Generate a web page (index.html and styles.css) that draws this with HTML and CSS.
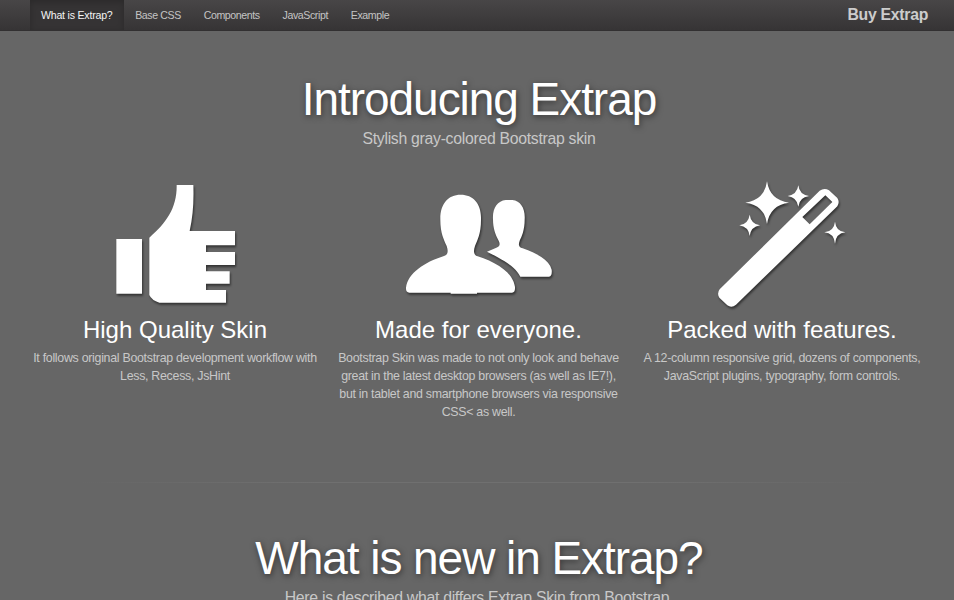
FILE: index.html
```
<!DOCTYPE html>
<html lang="en">
<head>
  <meta charset="UTF-8" />
  <meta name="viewport" content="width=device-width, initial-scale=1.0"/>
  <title>Extrap</title>
  <link rel="stylesheet" href="styles.css">
</head>
<body>

  <nav class="navbar">
    <ul class="nav">
      <li class="active"><a href="#">What is Extrap?</a></li>
      <li><a href="#">Base CSS</a></li>
      <li><a href="#">Components</a></li>
      <li><a href="#">JavaScript</a></li>
      <li><a href="#">Example</a></li>
    </ul>
    <a class="brand" href="#">Buy Extrap</a>
  </nav>

  <div class="marketing">
    <h1>Introducing Extrap</h1>
    <p class="byline">Stylish gray-colored Bootstrap skin</p>

    <div class="row">
      <div class="feature">
        <svg class="icon" viewBox="-30 3 510 408">
          <path d="M49 192H126V356H49Z"/>
          <path d="M230 30H280Q283 106 269 168H405V211H318V231H405V270H318V289H389V326H318V345H378V383H178Q155 376 148 360V188C200 143 231 98 230 30Z"/>
        </svg>
        <h3>High Quality Skin</h3>
        <p>It follows original Bootstrap development workflow with Less, Recess, JsHint</p>
      </div>
      <div class="feature">
        <svg class="icon" viewBox="-3 -12 510 408">
          <path d="M197 44C236 44 260 73 258 119C258 161 247 180 240 198C234 216 237 225 248 229C304 247 354 277 360 321Q361 337 351 338H246V341H167V338H43Q32 337 33 323C39 279 89 247 145 229C158 225 161 216 155 198C147 179 136 160 136 119C135 73 158 44 197 44Z"/>
          <path d="M332 60H352C378 63 391 86 389 118C389 151 380 171 374 182C370 193 370 202 383 205C423 219 463 240 470 269Q472 289 462 290H376C360 258 322 238 276 215L304 203C315 199 316 192 311 182C301 164 294 144 294 118C292 84 307 63 332 60Z"/>
        </svg>
        <h3>Made for everyone.</h3>
        <p>Bootstrap Skin was made to not only look and behave great in the latest desktop browsers (as well as IE7!), but in tablet and smartphone browsers via responsive CSS&lt; as well.</p>
      </div>
      <div class="feature">
        <svg class="icon" viewBox="-24 18 510 408">
          <path d="M186 34Q195 91 252 98Q195 105 186 162Q178 105 121 98Q178 91 186 34Z"/>
          <path d="M280 46Q283 74 312 78Q283 82 280 110Q276 82 248 78Q276 74 280 46Z"/>
          <path d="M134 134Q138 162 165 166Q138 170 134 198Q130 170 103 166Q130 162 134 134Z"/>
          <path d="M390 155Q393 184 421 187Q393 190 390 221Q387 190 358 187Q387 184 390 155Z"/>
          <path fill-rule="evenodd" d="M344 62Q358 53 372 61L397 84Q405 96 397 109L93 404Q80 415 67 406L43 383Q35 370 44 358ZM361 76L292 141L314 163L382 96Z"/>
        </svg>
        <h3>Packed with features.</h3>
        <p>A 12-column responsive grid, dozens of components, JavaScript plugins, typography, form controls.</p>
      </div>
    </div>

    <hr class="divider">

    <h1>What is new in Extrap?</h1>
    <p class="byline">Here is described what differs Extrap Skin from Bootstrap.</p>
  </div>

</body>
</html>
```
FILE: styles.css
```
body {
  margin: 0;
  height: 600px;
  overflow: hidden;
  font-family: "Liberation Sans", Arial, sans-serif;
  font-size: 12.4px;
  line-height: 18px;
  letter-spacing: -0.29px;
  color: #c8c8c8;
  background-color: #666;
}

a {
  color: #c4c4c4;
  text-decoration: none;
}

.navbar {
  display: flex;
  justify-content: space-between;
  box-sizing: border-box;
  height: 31px;
  padding: 0 26px 0 30px;
  background: linear-gradient(#484647, #363435);
  border-bottom: 1px solid #323031;
}

.nav {
  display: flex;
  margin: 0;
  padding: 0;
  list-style: none;
}

.nav a {
  display: block;
  padding: 0 11.4px;
  font-size: 10.6px;
  line-height: 31px;
  height: 30px;
  letter-spacing: -0.4px;
}

.nav .active a {
  padding: 0 11.3px 0 11px;
  letter-spacing: -0.22px;
  color: #f4f4f4;
  background: #353334;
  box-shadow: inset 0 2px 6px rgba(0, 0, 0, 0.2);
}

.brand {
  font-size: 15.8px;
  font-weight: bold;
  line-height: 30px;
  color: #ccc;
}

.marketing {
  padding: 44px 26px 0 30px;
  text-align: center;
}

h1 {
  margin: 0;
  font-size: 46px;
  font-weight: normal;
  line-height: 48px;
  letter-spacing: -1.05px;
  color: #fff;
  text-shadow: 1px 2px 6px rgba(0, 0, 0, 0.5);
}

.byline {
  margin: 6px 0 0;
  font-size: 15.8px;
  line-height: 20px;
}

.row {
  display: grid;
  grid-template-columns: repeat(3, 290px);
  gap: 13.5px;
  height: 254px;
  margin-top: 27px;
}

.icon {
  display: block;
  width: 170px;
  height: 136px;
  margin: 0 auto;
  fill: #fff;
  filter: drop-shadow(1px 2px 1px rgba(0, 0, 0, 0.5));
}

.feature h3 {
  margin: 3px 0 4px;
  font-size: 24px;
  font-weight: normal;
  line-height: 30px;
  letter-spacing: 0;
  color: #fff;
}

.feature p {
  margin: 0 2px;
}

.divider {
  height: 1px;
  margin: 52px 50px 51px;
  border: 0;
  background: linear-gradient(to right, transparent, #707070 30%, #707070 70%, transparent);
}
```
